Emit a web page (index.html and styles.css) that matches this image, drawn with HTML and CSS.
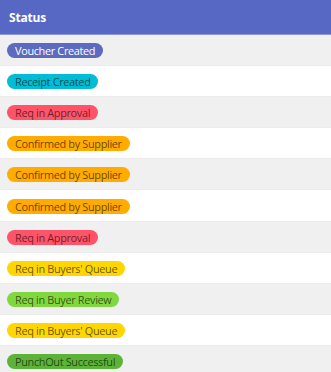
FILE: index.html
```html
<!DOCTYPE html>
<html>
<head>
<meta charset="utf-8">
<link rel="stylesheet" href="styles.css">
</head>
<body>
<div class="table">
  <div class="head">Status</div>
  <div class="row"><span class="badge indigo">Voucher Created</span></div>
  <div class="row"><span class="badge cyan">Receipt Created</span></div>
  <div class="row"><span class="badge red">Req in Approval</span></div>
  <div class="row"><span class="badge amber">Confirmed by Supplier</span></div>
  <div class="row"><span class="badge amber">Confirmed by Supplier</span></div>
  <div class="row"><span class="badge amber">Confirmed by Supplier</span></div>
  <div class="row"><span class="badge red">Req in Approval</span></div>
  <div class="row"><span class="badge yellow">Req in Buyers' Queue</span></div>
  <div class="row"><span class="badge lime">Req in Buyer Review</span></div>
  <div class="row"><span class="badge yellow">Req in Buyers' Queue</span></div>
  <div class="row"><span class="badge green">PunchOut Successful</span></div>
</div>
</body>
</html>
```
FILE: styles.css
```css
html, body {
  margin: 0;
  padding: 0;
  background: #fff;
  font-family: "Open Sans", "Noto Sans", sans-serif;
}
.table {
  width: 331px;
  display: flex;
  flex-direction: column;
}
.head {
  height: 35px;
  box-sizing: border-box;
  background: #5768c4;
  border-bottom: 1px solid #8c98d8;
  color: #fff;
  font-weight: 700;
  font-size: 12px;
  display: flex;
  align-items: center;
  padding-left: 9px;
  padding-top: 1px;
  letter-spacing: -0.2px;
}
.row {
  height: 31.1px;
  box-sizing: border-box;
  display: flex;
  align-items: center;
  padding-left: 7px;
  padding-top: 1px;
  background: #fff;
  border-bottom: 1px solid #ececec;
}
.row:nth-child(even) {
  background: #f0f0f0;
}
.badge {
  display: inline-flex;
  align-items: center;
  height: 15px;
  padding: 0 8px 0 8px;
  border-radius: 8px;
  font-size: 10.9px;
  letter-spacing: -0.33px;
  line-height: 15px;
  color: rgba(0, 0, 0, 0.62);
  white-space: nowrap;
}
.indigo { background: #5c6bc0; color: #fff; }
.cyan { background: #00bcd4; }
.red { background: #ff5369; }
.amber { background: #ffab00; }
.yellow { background: #ffd600; }
.lime { background: #80d83e; }
.green { background: #5cb338; }
```
